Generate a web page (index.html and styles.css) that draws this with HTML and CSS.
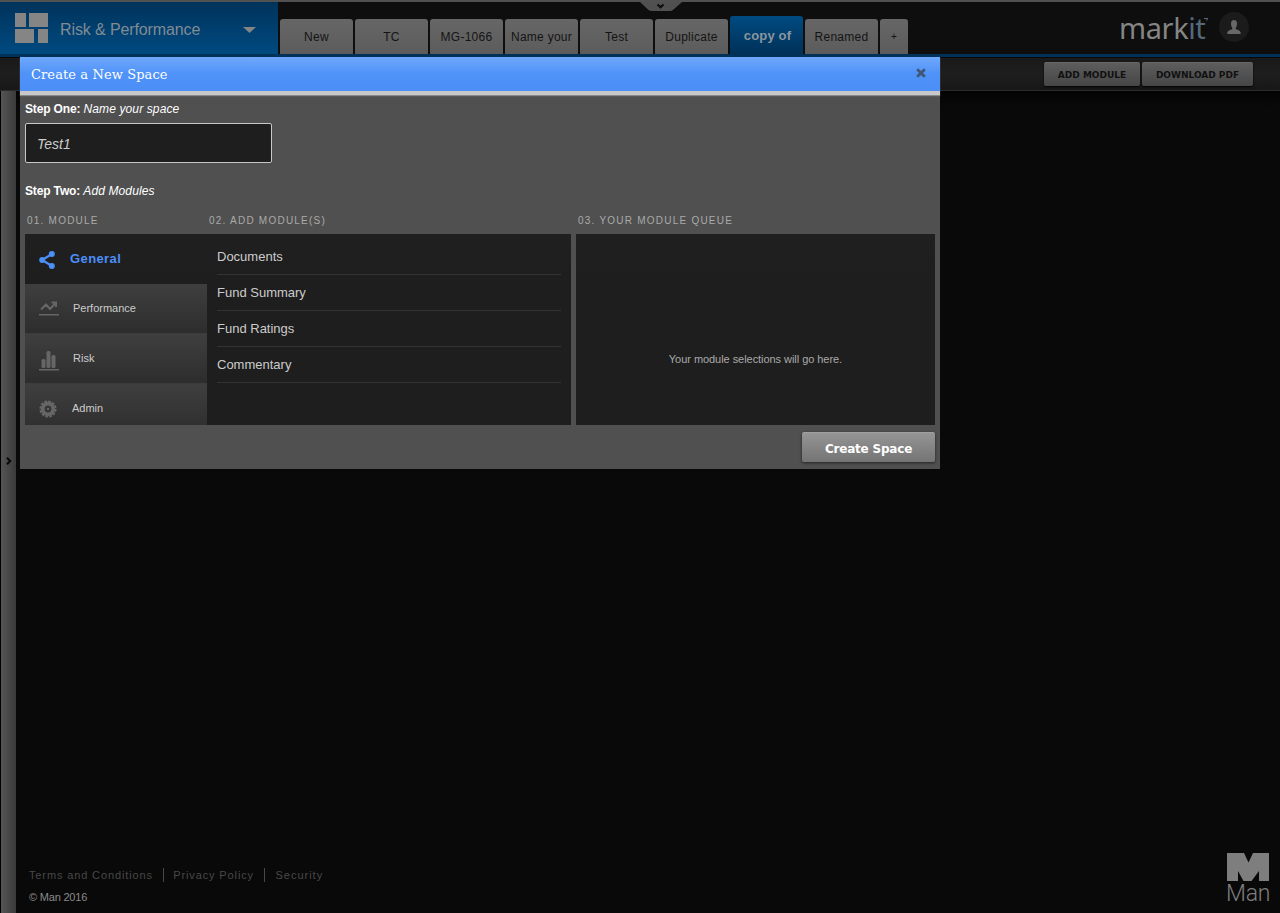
FILE: index.html
```html
<!DOCTYPE html>
<html lang="en">
<head>
<meta charset="utf-8">
<title>Risk &amp; Performance</title>
<link rel="stylesheet" href="styles.css">
</head>
<body>
<header class="topbar">
  <div class="app-menu">
    <svg class="app-icon" width="33" height="30" viewBox="0 0 33 30"><path d="M0 0h11v14H0zM14 0h19v14H14zM0 16h19v14H0zM23 16h10v14H23z"/></svg>
    <span class="app-name">Risk &amp; Performance</span>
    <svg class="caret" width="13" height="6" viewBox="0 0 13 6"><path d="M0 0h13L6.500 6z"/></svg>
  </div>
  <nav class="tabs">
    <a class="tab"><span>New</span></a>
    <a class="tab"><span>TC</span></a>
    <a class="tab"><span>MG-1066</span></a>
    <a class="tab"><span>Name your</span></a>
    <a class="tab"><span>Test</span></a>
    <a class="tab"><span>Duplicate</span></a>
    <a class="tab active"><span>copy of</span></a>
    <a class="tab"><span>Renamed</span></a>
    <a class="tab add"><span>+</span></a>
  </nav>
  <div class="account">
    <div class="brand">mark<span class="brand-it">it</span><svg width="4" height="3" viewBox="0 0 4 3"><path d="M0 .5h4M3 0v2.500" stroke="#56697a" fill="none"/></svg></div>
    <div class="avatar"><svg width="14" height="15" viewBox="0 0 14 15"><path d="M7 0c2 0 3 1.300 3 3.500C10 6 9.300 7 8.700 8v1.300c2 .8 5 1 5 4V14H.3v-.7c0-3 3-3.200 5-4V8C4.700 7 4 6 4 3.500 4 1.300 5 0 7 0z"/></svg></div>
  </div>
  <svg class="pull-tab" width="42" height="9" viewBox="0 0 42 9"><path d="M0 0h42L33.500 7.500Q32 9 30 9H12Q9.500 9 8 7.500z" fill="#505050"/><path d="M17.500 2.500l3 2.800 3-2.800" fill="none" stroke="#0c0c0c" stroke-width="2"/></svg>
</header>
<div class="toolbar">
  <a class="tool add-module"><span>ADD MODULE</span></a>
  <a class="tool download"><span>DOWNLOAD PDF</span></a>
</div>
<main class="workspace">
  <aside class="rail"><svg width="6" height="8" viewBox="0 0 6 8"><path d="M1 .8L4.200 4 1 7.200" fill="none" stroke="#080808" stroke-width="2"/></svg></aside>
  <footer class="footer">
    <div>
      <div class="links"><a>Terms and Conditions</a><a>Privacy Policy</a><a class="security">Security</a></div>
      <div class="copyright">© Man 2016</div>
    </div>
    <div class="man">
      <svg width="42" height="28" viewBox="0 0 42 28"><path d="M0 0h17l4.500 9.500L26 0h16v28H32V18l-7.500 10h-8L11 18v10H0z"/></svg>
      <span>Man</span>
    </div>
  </footer>
</main>
<section class="dialog">
  <div class="dialog-head">
    <h1>Create a New Space</h1>
    <svg width="10" height="10" viewBox="0 0 10 10"><path d="M1.200 1.200l7.600 7.600M8.800 1.200l-7.600 7.600" stroke="#405675" stroke-width="2.800"/></svg>
  </div>
  <div class="dialog-body">
    <p class="step"><b>Step One:</b> <i class="s-one">Name your space</i></p>
    <div class="name-input"><i>Test1</i></div>
    <p class="step two"><b>Step Two:</b> <i class="s-one">Add Modules</i></p>
    <div class="heads"><span>01. MODULE</span><span>02. ADD MODULE(S)</span><span>03. YOUR MODULE QUEUE</span></div>
    <div class="panels">
      <div class="picker">
        <ul class="cats">
          <li class="cat selected"><svg width="20" height="20" viewBox="0 0 20 20"><path d="M13 4L3 10l10 6" fill="none" stroke="#4c8ff8" stroke-width="2.200"/><g fill="#4c8ff8"><circle cx="12.800" cy="4" r="3"/><circle cx="3.200" cy="10" r="3"/><circle cx="12.800" cy="16" r="3"/></g></svg><span>General</span></li>
          <li class="cat"><svg width="20" height="20" viewBox="0 0 20 20"><path d="M2 10.500l5-5 4 4.500 6-6.500M12.500 3.500H17V8" fill="none" stroke="#666" stroke-width="2"/><path d="M0 15h20v1.500H0z" fill="#666"/></svg><span>Performance</span></li>
          <li class="cat risk"><svg width="20" height="20" viewBox="0 0 20 20"><g fill="#666"><rect x="2.500" y="8" width="4" height="9" rx="1.500"/><rect x="7.500" y="0" width="4" height="17" rx="1.500"/><rect x="12.500" y="4" width="4" height="13" rx="1.500"/><path d="M0 18h20v1.500H0z"/></g></svg><span>Risk</span></li>
          <li class="cat admin"><svg width="20" height="20" viewBox="0 0 20 20"><g fill="none" stroke="#666"><circle cx="9" cy="10" r="5.300" stroke-width="3.800"/><circle cx="9" cy="10" r="7.600" stroke-width="2" stroke-dasharray="2.700 1.280"/></g><circle cx="9" cy="10" r="1" fill="#777"/></svg><span>Admin</span></li>
        </ul>
        <ul class="modules">
          <li>Documents</li>
          <li>Fund Summary</li>
          <li>Fund Ratings</li>
          <li>Commentary</li>
        </ul>
      </div>
      <div class="queue"><span>Your module selections will go here.</span></div>
    </div>
    <div class="actions"><a class="create"><span>Create Space</span></a></div>
  </div>
</section>
</body>
</html>
```
FILE: styles.css
```css
* { box-sizing: border-box; }
body {
  margin: 0;
  width: 1280px;
  height: 913px;
  position: relative;
  overflow: hidden;
  background: #090909;
  color: #ccc;
  font-family: "Liberation Sans", Arial, sans-serif;
  display: flex;
  flex-direction: column;
}
ul { margin: 0; padding: 0; list-style: none; }
span, i, b, a { white-space: nowrap; }

.topbar {
  position: relative;
  height: 57px;
  flex: none;
  display: flex;
  border-top: 2px solid #515151;
  border-bottom: 3px solid #003159;
  background: #0e0e0e;
}
.pull-tab { position: absolute; left: 640px; top: 0; }
.app-menu {
  width: 278px;
  display: flex;
  align-items: flex-start;
  padding: 11px 22px 0 15px;
  background: linear-gradient(#00335b, #004a80);
}
.app-icon, .caret { fill: #858585; flex: none; }
.app-name {
  margin-left: 12px;
  width: 183px;
  font-size: 16px;
  line-height: 33px;
  letter-spacing: -0.11px;
  color: #808b94;
}
.caret { margin-top: 14px; }
.tabs { display: flex; align-items: flex-end; gap: 2px; padding-left: 2px; }
.tab {
  width: 73px;
  height: 35px;
  display: flex;
  justify-content: center;
  border-radius: 3px 3px 0 0;
  background: linear-gradient(#666, #5c5c5c);
  color: #141414;
  font-size: 12px;
  line-height: 36px;
  letter-spacing: 0.25px;
}
.active {
  height: 38px;
  background: linear-gradient(#004b82, #003158);
  color: #8b969f;
  font-weight: bold;
  font-size: 13px;
  line-height: 40px;
  letter-spacing: 0.15px;
  padding-left: 2px;
}
.add { width: 28px; font-size: 10px; }
.account { margin-left: auto; display: flex; padding-right: 31px; }
.brand {
  width: 100px;
  color: #858585;
  font: 29px/51px "Noto Sans", sans-serif;
  letter-spacing: -0.4px;
  white-space: nowrap;
}
.brand-it { color: #56697a; }
.brand svg { vertical-align: 18px; margin-left: -1px; }
.avatar {
  width: 30px;
  height: 30px;
  margin-top: 10px;
  border-radius: 50%;
  background: #1b1b1b;
  display: flex;
  align-items: center;
  justify-content: center;
}
.avatar svg { fill: #686868; }

.toolbar {
  height: 34px;
  flex: none;
  display: flex;
  justify-content: flex-end;
  gap: 2px;
  padding: 4px 27px 0 0;
  border-top: 1px solid #080808;
  border-bottom: 1px solid #2b2b2b;
  background: linear-gradient(#191919, #1e1e1e 50%, #171717);
}
.tool {
  height: 24px;
  display: flex;
  justify-content: center;
  border-radius: 2px;
  border-top: 1px solid #686868;
  background: linear-gradient(#5d5d5d, #464646);
  box-shadow: 0 1px 2px #000;
  color: #111;
  font: bold 9px/24px "DejaVu Sans", sans-serif;
}
.add-module { width: 96px; }
.download { width: 111px; }

.workspace { flex: 1; display: flex; background: linear-gradient(#030303, #090909 16px); }
.rail {
  width: 16px;
  border-left: 1px solid #000;
  background: linear-gradient(90deg, #555, #3a3a3a);
  padding: 366px 0 0 5px;
}
.rail svg { display: block; }
.footer {
  flex: 1;
  align-self: flex-end;
  height: 60px;
  display: flex;
  justify-content: space-between;
  padding: 0 11px 0 13px;
}
.links { display: flex; padding-top: 15px; font-size: 11px; line-height: 14px; letter-spacing: 0.87px; color: #484848; }
.links a + a { border-left: 1px solid #484848; padding-left: 9px; margin-left: 10.5px; }
.links .security { letter-spacing: 1px; padding-left: 10px; }
.copyright { margin-top: 9px; font-size: 11px; line-height: 13px; letter-spacing: -0.2px; color: #8a8a8a; }
.man { width: 42px; display: flex; flex-direction: column; color: #7e7e7e; }
.man svg { display: block; fill: #7e7e7e; }
.man span { margin: 1px 0 0 -1px; font: 300 23px/24px Roboto, sans-serif; letter-spacing: -0.2px; }

.dialog { position: absolute; left: 20px; top: 57px; width: 920px; height: 412px; background: #505050; }
.dialog-head {
  height: 38px;
  display: flex;
  justify-content: space-between;
  padding: 11px 14px 0 11px;
  border-bottom: 4px solid #c8c8c8;
  background: linear-gradient(#6fa8fc, #4f92f8 50%, #4b8ff7);
  box-shadow: 0 1px 1px #888;
}
.dialog-head h1 { margin: 0; font: 13px/14px "DejaVu Serif", serif; letter-spacing: 0.1px; color: #fff; white-space: nowrap; }
.dialog-body { padding: 6px 5px 0; }
.step { margin: 0; font-size: 12px; line-height: 16px; letter-spacing: -0.15px; color: #fff; }
.s-one { letter-spacing: 0.12px; }
.name-input {
  width: 247px;
  height: 40px;
  margin-top: 6px;
  padding-left: 11px;
  border: 1px solid #c8c8c8;
  border-radius: 2px;
  background: #1e1e1e;
  font-size: 14px;
  line-height: 40px;
  color: #ccc;
}
.two { margin-top: 20px; }
.heads { display: grid; grid-template-columns: 182px 369px 1fr; margin-top: 15px; padding-left: 2px; font-size: 10px; line-height: 13px; letter-spacing: 1.23px; color: #aaa; }
.panels { display: flex; gap: 5px; height: 191px; margin-top: 7px; overflow: hidden; }
.picker { width: 546px; display: flex; background: linear-gradient(#202020, #1e1e1e 40px); }
.cats { width: 182px; }
.cat {
  height: 50px;
  display: flex;
  align-items: center;
  padding: 0 0 0 14px;
  border-bottom: 1px solid #3c3c3c;
  background: linear-gradient(#3f3f3f, #2d2d2d);
  font-size: 11px;
  line-height: 13px;
  color: #ccc;
}
.cat span { margin: 0 0 0 14px; }
.admin span { margin-left: 13px; }
.risk svg { margin-top: 4px; }
.admin svg { margin-top: 1px; }
.selected { background: none; border-bottom-color: transparent; color: #4c8ff8; font-size: 13px; font-weight: bold; letter-spacing: 0.4px; }
.selected svg { margin-top: 3px; }
.selected span { margin: 0 0 0 11px; }
.modules { flex: 1; padding: 5px 10px 0; font-size: 13px; line-height: 35px; }
.modules li { height: 36px; border-bottom: 1px solid #333; }
.queue {
  flex: 1;
  display: flex;
  align-items: flex-end;
  justify-content: center;
  padding-bottom: 59px;
  background: linear-gradient(#202020, #1e1e1e 40px);
  font-size: 11px;
  line-height: 14px;
  letter-spacing: -0.05px;
  color: #aaa;
}
.actions { display: flex; justify-content: flex-end; padding-top: 7px; }
.create {
  width: 133px;
  height: 30px;
  display: flex;
  justify-content: center;
  border-radius: 2px;
  border-top: 1px solid #a0a0a0;
  background: linear-gradient(#959595, #747474);
  box-shadow: 0 1px 3px #222;
  color: #fff;
  font: bold 12px/32px "DejaVu Sans", sans-serif;
  letter-spacing: -0.2px;
}
```
